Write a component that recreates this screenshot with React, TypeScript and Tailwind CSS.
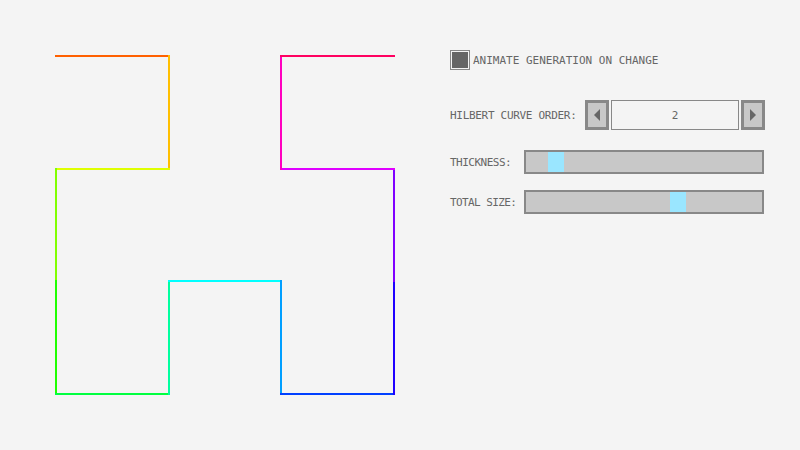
import React from "react";

const P = [56, 169, 281, 394];
const pts: [number, number][] = [
  [0, 0], [1, 0], [1, 1], [0, 1], [0, 2], [0, 3], [1, 3], [1, 2],
  [2, 2], [2, 3], [3, 3], [3, 2], [3, 1], [2, 1], [2, 0], [3, 0],
];

function Curve() {
  const segs = [];
  for (let i = 0; i < pts.length - 1; i++) {
    const [x1, y1] = pts[i];
    const [x2, y2] = pts[i + 1];
    segs.push(
      <line
        key={i}
        x1={P[x1]}
        y1={P[y1]}
        x2={P[x2]}
        y2={P[y2]}
        stroke={`hsl(${(i + 1) * 22.5}, 100%, 50%)`}
        strokeWidth={2}
        strokeLinecap="square"
      />
    );
  }
  return (
    <svg width={450} height={450} viewBox="0 0 450 450">
      {segs}
    </svg>
  );
}

function Btn({ dir }: { dir: "l" | "r" }) {
  return (
    <div className="w-[24px] h-[30px] border-[3px] border-[#888] bg-[#c8c8c8] flex items-center justify-center">
      <svg width={6} height={12} viewBox="0 0 6 12">
        {dir === "l" ? (
          <polygon points="6,0 6,12 0,6" fill="#666" />
        ) : (
          <polygon points="0,0 0,12 6,6" fill="#666" />
        )}
      </svg>
    </div>
  );
}

function Slider({ left }: { left: number }) {
  return (
    <div className="relative w-[240px] h-[24px] border-2 border-[#888] bg-[#c8c8c8]">
      <div
        className="absolute top-0 w-[16px] h-[20px] bg-[#9ae6ff]"
        style={{ left }}
      />
    </div>
  );
}

export default function App() {
  return (
    <div className="w-[800px] h-[450px] bg-[#f4f4f4] flex overflow-hidden">
      <div className="w-[450px] h-[450px] shrink-0">
        <Curve />
      </div>
      <div
        className="flex flex-col pt-[50px] text-[11px] text-[#666] leading-none"
        style={{ fontFamily: '"DejaVu Sans Mono", monospace' }}
      >
        <div className="flex items-center h-[20px]">
          <div className="w-[20px] h-[20px] border border-[#888] p-[1px] mr-[3px]">
            <div className="w-full h-full bg-[#666]" />
          </div>
          <span>ANIMATE GENERATION ON CHANGE</span>
        </div>
        <div className="flex items-center h-[30px] mt-[30px]">
          <span className="w-[135px] tracking-[-0.3px]">HILBERT CURVE ORDER:</span>
          <Btn dir="l" />
          <div className="w-[128px] h-[30px] mx-[2px] border border-[#888] bg-[#f4f4f4] flex items-center justify-center">
            2
          </div>
          <Btn dir="r" />
        </div>
        <div className="flex items-center h-[24px] mt-[20px]">
          <span className="w-[74px] tracking-[-0.5px]">THICKNESS:</span>
          <Slider left={22} />
        </div>
        <div className="flex items-center h-[24px] mt-[16px]">
          <span className="w-[74px] tracking-[-0.6px]">TOTAL SIZE:</span>
          <Slider left={144} />
        </div>
      </div>
    </div>
  );
}
